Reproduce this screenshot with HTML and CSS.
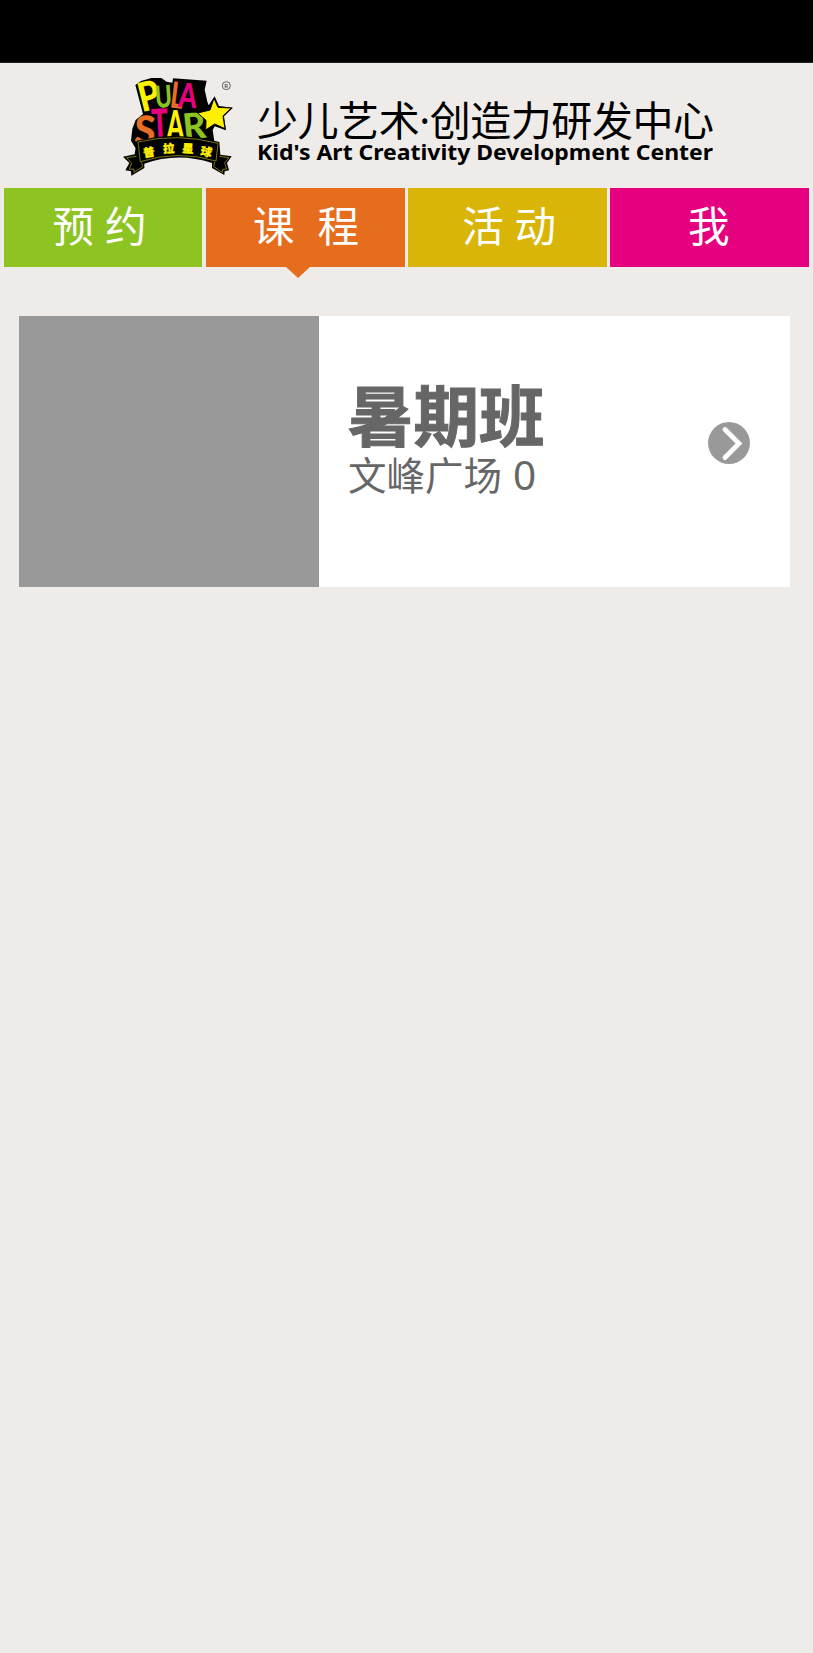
FILE: index.html
```html
<!DOCTYPE html>
<html lang="zh-CN">
<head>
<meta charset="utf-8">
<title>课程</title>
<link rel="stylesheet" href="styles.css">
</head>
<body>
<div class="status-bar"></div>
<header class="brand">
  <svg class="logo" viewBox="0 0 375 330" role="img" aria-label="PULA STAR">
    <path class="black" d="M61 45L78 33L109 24L139 24L155 35L172 38L174 25L275 32L269 59L277 95L281 106L299 79L312 108L354 113L327 139L333 181L299 169L293 180L298 214L292 225L85 225L62 235L48 212L52 176L62 150L84 132Z"/>
    <g class="letters">
      <text class="yellow" transform="translate(81 127) rotate(-14) scale(1.5 1.78)">P</text>
      <text class="green" transform="translate(122 114) rotate(-4) scale(1 1.35)">U</text>
      <text class="orange" transform="translate(163 112) rotate(7) scale(1.08 1.6)">L</text>
      <text class="pink" transform="translate(188 110) rotate(5) scale(1.15 1.5)">A</text>
      <text class="orange" transform="translate(56 221) rotate(3) scale(1.7 1.75)">S</text>
      <text class="pink" transform="translate(112 207) rotate(-3) scale(1.22 1.82)">T</text>
      <text class="yellow" transform="translate(155 208) scale(1.08 1.78)">A</text>
      <text class="green" transform="translate(208 210) rotate(-6) scale(1.55 1.6)">R</text>
    </g>
    <path class="star" d="M297 85L309 112L349 114L324 138L330 176L299 162L272 180L273 151L248 129L285 120Z"/>
    <path class="black" d="M65 212Q188 182 313 216L316 254L350 259L336 279L342 301L329 304L328 315L291 294L291 279Q188 245 88 281L88 294L49 317L48 304L31 301L43 279L24 260L59 253Z"/>
    <path class="trim" d="M69 216Q188 188 309 220L303 273Q188 239 76 275ZM64 259L35 263L50 280L43 298L57 297L57 307L83 290L80 277M313 259L342 263L329 279L335 297L323 298L322 307L296 290L299 276"/>
    <g class="ribbon-text">
      <text transform="translate(87 262) rotate(-9)">普</text>
      <text transform="translate(145 249) rotate(-3)">拉</text>
      <text transform="translate(201 247) rotate(4)">星</text>
      <text transform="translate(255 255) rotate(10)">球</text>
    </g>
    <circle class="ring" cx="334" cy="47" r="12"/>
    <text class="reg" x="328" y="54">R</text>
  </svg>
  <svg class="slogan" viewBox="0 0 460 80">
    <text class="slogan-cn" x="0" y="45.5" textLength="457">少儿艺术·创造力研发中心</text>
    <text class="slogan-en" x="0" y="70" textLength="456" lengthAdjust="spacingAndGlyphs">Kid's Art Creativity Development Center</text>
  </svg>
</header>
<nav class="tabs">
  <a class="tab tab-book"><span>预 约</span></a>
  <a class="tab tab-course"><span>课&nbsp; 程</span></a>
  <a class="tab tab-event"><span>活 动</span></a>
  <a class="tab tab-me"><span>我</span></a>
</nav>
<main class="list">
  <article class="card">
    <div class="thumb"></div>
    <div class="info">
      <h2 class="title">暑期班</h2>
      <p class="place">文峰广场 <span class="count">0</span></p>
    </div>
    <svg class="arrow" viewBox="0 0 42 42"><circle cx="21" cy="21" r="21"/><path d="M17 7.5L31 21.5L17 35.5"/></svg>
  </article>
</main>
</body>
</html>
```
FILE: styles.css
```css
* { box-sizing: border-box; }
body {
  margin: 0;
  min-height: 1653px;
  background: #eeebe8;
  font-family: "Noto Sans", "Noto Sans CJK SC", sans-serif;
}
.status-bar { height: 63px; background: #000; border-bottom: 1px solid #222; }
.brand { height: 125px; display: flex; padding: 7px 0 0 115px; }
.logo { width: 125px; height: 110px; flex: none; }
.slogan { width: 460px; height: 80px; margin: 20px 0 0 17px; flex: none; overflow: visible; }
.slogan-cn { font-size: 41px; }
.slogan-en { font-size: 22px; font-weight: 700; }
.black { fill: #000; }
.letters { font: 900 68px Lato, "Noto Sans", sans-serif; }
.yellow { fill: #fff100; }
.green { fill: #8dc321; }
.orange { fill: #e76f24; }
.pink { fill: #e4007f; }
.star { fill: #fff000; stroke: #000; stroke-width: 3; }
.trim { fill: none; stroke: #b8ad17; stroke-width: 2; }
.ribbon-text { font: 900 34px "Noto Sans CJK SC", sans-serif; fill: #fff100; stroke: #fff100; stroke-width: 1; }
.ring { fill: none; stroke: #222; stroke-width: 2; }
.reg { font-size: 18px; fill: #222; }

.tabs {
  display: grid;
  grid-template-columns: repeat(4, 1fr);
  column-gap: 3.3px;
  padding: 0 4.3px 0 3.6px;
}
.tab {
  height: 79px;
  display: flex;
  align-items: center;
  justify-content: center;
  position: relative;
  padding-bottom: 2px;
  color: #fff;
  font-size: 41.5px;
  line-height: 1;
  white-space: pre;
}
.tab-book { background: #8dc422; padding-right: 7px; }
.tab-course { background: #e76d1e; padding-left: 2px; word-spacing: .7px; }
.tab-event { background: #d8b506; padding-left: 4px; }
.tab-me { background: #e4007f; padding-right: 1px; }
.tab-course::after {
  content: "";
  position: absolute;
  top: 78px;
  left: 79px;
  border: 13px solid transparent;
  border-top: 12px solid #e76d1e;
  border-bottom: 0;
}
.list { padding: 49px 23px 0 19px; }
.card { height: 271px; display: flex; background: #fff; }
.thumb { width: 300px; background: #999; flex: none; }
.info { flex: 1; padding: 65px 0 0 29px; color: #666; }
.title { margin: 0; font-size: 65.5px; line-height: 70px; font-weight: 700; -webkit-text-stroke: 1px #666; }
.place { margin: 1px 0 0; font-size: 38.5px; line-height: 46px; }
.count { font-size: 40.5px; line-height: 1; padding-left: 1px; }
.arrow { width: 42px; height: 42px; margin: 106px 40px 0 0; flex: none; }
.arrow circle { fill: #999; }
.arrow path { fill: none; stroke: #fff; stroke-width: 4.8; stroke-linecap: round; }
```
